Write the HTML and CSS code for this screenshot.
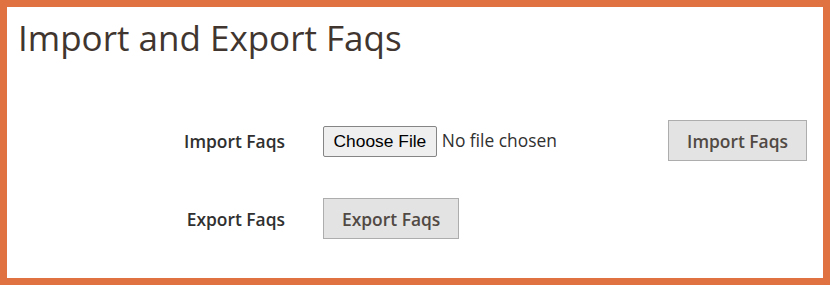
FILE: index.html
```html
<!DOCTYPE html>
<html>
<head>
<meta charset="utf-8">
<link rel="stylesheet" href="styles.css">
</head>
<body>
<div class="frame">
  <h1 class="title">Import and Export Faqs</h1>
  <div class="form">
    <div class="row">
      <label class="label">Import Faqs</label>
      <div class="control control-import">
        <input type="file" class="file">
        <button class="btn">Import Faqs</button>
      </div>
    </div>
    <div class="row">
      <label class="label">Export Faqs</label>
      <div class="control">
        <button class="btn">Export Faqs</button>
      </div>
    </div>
  </div>
</div>
</body>
</html>
```
FILE: styles.css
```css
html, body {
  margin: 0;
  padding: 0;
  background: #fff;
}
.frame {
  width: 830px;
  height: 285px;
  box-sizing: border-box;
  border: 7px solid #e07241;
  padding: 9px 16px 0 11px;
  font-family: "Open Sans", sans-serif;
}
.title {
  margin: 0;
  font-size: 35px;
  font-weight: 400;
  line-height: 44px;
  color: #41362f;
}
.form {
  margin-top: 60px;
  display: flex;
  flex-direction: column;
  gap: 37px;
}
.row {
  display: flex;
  align-items: center;
}
.label {
  width: 267px;
  text-align: right;
  font-size: 17.4px;
  font-weight: 600;
  color: #303030;
}
.control {
  margin-left: 38px;
  display: flex;
  align-items: center;
  flex: 1;
}
.control-import {
  justify-content: space-between;
}
.file {
  font-family: "Open Sans", sans-serif;
  font-size: 17.4px;
  color: #303030;
  margin-top: 2px;
}
.file::file-selector-button {
  font-family: "Liberation Sans", Arial, sans-serif;
  font-size: 17.4px;
  color: #000;
  background: #efefef;
  border: 1px solid #858585;
  border-radius: 2px;
  height: 31px;
  padding: 0 9.5px;
  margin-right: 5px;
}
.btn {
  font-family: "Open Sans", sans-serif;
  font-size: 17.4px;
  font-weight: 600;
  color: #514943;
  background: #e3e3e3;
  border: 1px solid #adadad;
  border-radius: 0;
  height: 41px;
  padding: 0 18px;
}
```
